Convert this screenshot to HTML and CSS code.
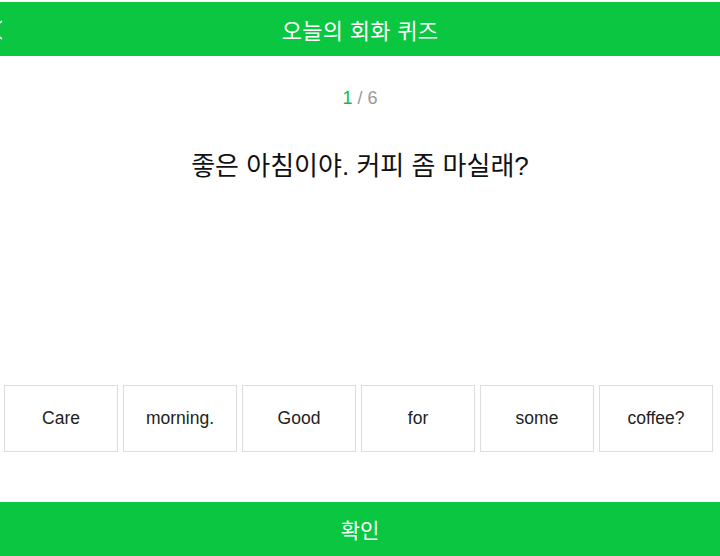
FILE: index.html
```html
<!DOCTYPE html>
<html lang="ko">
<head>
    <meta charset="UTF-8">
    <meta name="viewport" content="width=device-width, initial-scale=1.0">
    <title>오늘의 회화 퀴즈</title>
    <link rel="stylesheet" href="styles.css">
</head>
<body>
    <div id="app">
        <header class="top-bar">
            <button class="back-btn" aria-label="뒤로">
                <svg width="14" height="22" viewBox="0 0 14 22">
                    <polyline points="12,2 2,11 12,20" fill="none" stroke="#fff" stroke-width="1.5"/>
                </svg>
            </button>
            <h1 class="title">오늘의 회화 퀴즈</h1>
        </header>
        <main class="quiz">
            <p class="counter"><span class="current">1</span> / 6</p>
            <p class="question">좋은 아침이야. 커피 좀 마실래?</p>
            <div class="words">
                <button class="word">Care</button>
                <button class="word">morning.</button>
                <button class="word">Good</button>
                <button class="word">for</button>
                <button class="word">some</button>
                <button class="word">coffee?</button>
            </div>
        </main>
        <button class="confirm">확인</button>
    </div>
</body>
</html>
```
FILE: styles.css
```css
body {
    margin: 0;
    padding: 0;
    background: #fff;
    font-family: "Liberation Sans", "Noto Sans CJK KR", sans-serif;
}

#app {
    height: 556px;
    display: flex;
    flex-direction: column;
    box-sizing: border-box;
    padding-top: 2px;
    background: #fff;
}

.top-bar {
    position: relative;
    height: 54px;
    background: #0ac640;
    display: flex;
    justify-content: center;
    align-items: center;
}

.back-btn {
    position: absolute;
    left: -10px;
    top: 17px;
    padding: 0;
    border: none;
    background: none;
}

.title {
    margin: 0;
    color: #fff;
    font-family: "Noto Sans CJK KR", sans-serif;
    font-weight: 400;
    font-size: 22px;
    letter-spacing: 0.3px;
}

.quiz {
    flex: 1;
    display: flex;
    flex-direction: column;
}

.counter {
    margin: 31px 0 0;
    text-align: center;
    font-size: 18px;
    line-height: 22px;
    color: #999;
}

.current {
    color: #16b941;
}

.question {
    margin: 42px 0 0;
    text-align: center;
    font-family: "Liberation Sans", "Noto Sans CJK KR", sans-serif;
    font-size: 26px;
    line-height: 30px;
    color: #111;
}

.words {
    margin-top: auto;
    margin-bottom: 50px;
    padding: 0 7px 0 4px;
    display: grid;
    grid-template-columns: repeat(6, 1fr);
    gap: 5px;
}

.word {
    height: 67px;
    border: 1px solid #ddd;
    background: #fff;
    font-family: "Liberation Sans", sans-serif;
    font-size: 17.5px;
    color: #222;
    padding: 0;
}

.confirm {
    height: 54px;
    border: none;
    background: #0ac640;
    color: #fff;
    font-family: "Noto Sans CJK KR", sans-serif;
    font-size: 21px;
    padding: 0;
}
```
